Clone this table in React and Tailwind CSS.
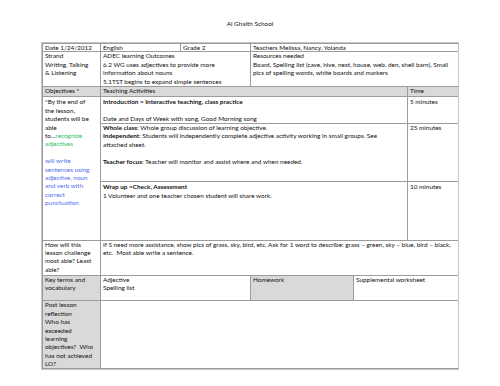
import React from "react";

const B = "border-r border-b border-[#9c9c9c] px-[2px] overflow-hidden";
const G = "bg-[#d9d9d9]";

export default function App() {
  return (
    <div
      className="w-[500px] h-[386px] bg-white text-[#111] text-[6.4px] leading-[8.4px]"
      style={{ fontFamily: "Lato, 'Liberation Sans', sans-serif" }}
    >
      <div className="pt-[20px] h-[43px] text-center">Al Ghaith School</div>
      <div
        className="mx-auto w-[416px] grid border-t border-l border-[#9c9c9c] outline outline-1 outline-[#c4c4c4]"
        style={{
          gridTemplateColumns: "58px 80px 70px 103px 54px 51px",
          gridTemplateRows: "8.4px 34.3px 10.7px 26.6px 58.4px 58.3px 35px 25.7px 67.6px",
        }}
      >
        {/* Row 1 */}
        <div className={B}>Date 1/24/2012</div>
        <div className={B}>English</div>
        <div className={B}>Grade 2</div>
        <div className={`${B} col-span-3`}>Teachers Melissa, Nancy, Yolanda</div>

        {/* Row 2 */}
        <div className={B}>
          Strand
          <br />
          Writing, Talking
          <br />
          &amp; Listening
        </div>
        <div className={`${B} col-span-2`}>
          ADEC learning Outcomes
          <br />
          6.2 WG uses adjectives to provide more
          <br />
          information about nouns
          <br />
          5.1TST begins to expand simple sentences
        </div>
        <div className={`${B} col-span-3`}>
          Resources needed
          <br />
          Board, Spelling list (cave, hive, nest, house, web, den, shell barn), Small
          <br />
          pics of spelling words, white boards and markers
        </div>

        {/* Row 3 */}
        <div className={`${B} ${G} flex items-center`}>Objectives *</div>
        <div className={`${B} ${G} col-span-4 flex items-center`}>Teaching Activities</div>
        <div className={`${B} ${G} flex items-center`}>Time</div>

        {/* Rows 4-6 */}
        <div className={`${B} row-span-3 pt-[1px]`}>
          *By the end of
          <br />
          the lesson,
          <br />
          students will be
          <br />
          able
          <br />
          to...<span className="text-[#2fbf6b]">recognize</span>
          <br />
          <span className="text-[#2fbf6b]">adjectives</span>
          <br />
          <br />
          <span className="text-[#4f6ff0]">
            will write
            <br />
            sentences using
            <br />
            adjective, noun
            <br />
            and verb with
            <br />
            correct
            <br />
            punctuation
          </span>
        </div>
        <div className={`${B} col-span-4 pt-[1px]`}>
          <b>Introduction = Interactive teaching, class practice</b>
          <br />
          <br />
          Date and Days of Week with song, Good Morning song
        </div>
        <div className={`${B} pt-[1px]`}>5 minutes</div>

        <div className={`${B} col-span-4`}>
          <b>Whole class:</b> Whole group discussion of learning objective.
          <br />
          <b>Independent</b>: Students will independently complete adjective activity working in small groups. See
          <br />
          attached sheet.
          <br />
          <br />
          <b>Teacher focus</b>: Teacher will monitor and assist where and when needed.
        </div>
        <div className={B}>25 minutes</div>

        <div className={`${B} col-span-4 pt-[1px]`}>
          <b>Wrap up =Check, Assessment</b>
          <br />1 Volunteer and one teacher chosen student will share work.
        </div>
        <div className={`${B} pt-[1px]`}>10 minutes</div>

        {/* Row 7 */}
        <div className={B}>
          How will this
          <br />
          lesson challenge
          <br />
          most able? Least
          <br />
          able?
        </div>
        <div className={`${B} col-span-5`}>
          If S need more assistance, show pics of grass, sky, bird, etc. Ask for 1 word to describe: grass – green, sky – blue, bird – black,
          <br />
          etc.&nbsp; Most able write a sentence.
        </div>

        {/* Row 8 */}
        <div className={`${B} ${G}`}>
          Key terms and
          <br />
          vocabulary
        </div>
        <div className={`${B} col-span-2`}>
          Adjective
          <br />
          Spelling list
        </div>
        <div className={`${B} ${G}`}>Homework</div>
        <div className={`${B} col-span-2`}>Supplemental worksheet</div>

        {/* Row 9 */}
        <div className={`${B} ${G}`}>
          Post lesson
          <br />
          reflection
          <br />
          Who has
          <br />
          exceeded
          <br />
          learning
          <br />
          objectives?&nbsp; Who
          <br />
          has not achieved
          <br />
          LO?
        </div>
        <div className={`${B} col-span-5`}></div>
      </div>
    </div>
  );
}
